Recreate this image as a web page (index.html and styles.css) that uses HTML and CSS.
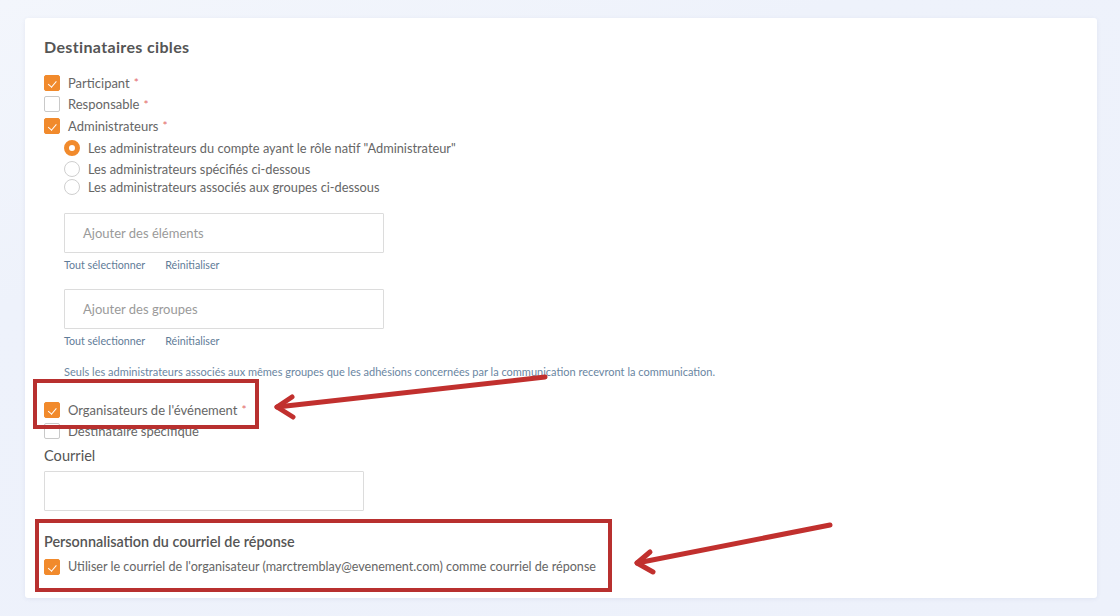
FILE: index.html
```html
<!DOCTYPE html>
<html lang="fr">
<head>
    <meta charset="UTF-8">
    <meta name="viewport" content="width=device-width, initial-scale=1.0">
    <title>Destinataires cibles</title>
    <link rel="stylesheet" href="styles.css">
</head>
<body>
    <div class="card">
        <h2 class="section-title">Destinataires cibles</h2>

        <div class="check-list">
            <label class="check-row"><span class="box checked"></span>Participant <span class="req">*</span></label>
            <label class="check-row"><span class="box"></span>Responsable <span class="req">*</span></label>
            <label class="check-row"><span class="box checked"></span>Administrateurs <span class="req">*</span></label>
        </div>

        <div class="admin-options">
            <div class="radio-list">
                <label class="radio-row first"><span class="radio selected"></span>Les administrateurs du compte ayant le rôle natif "Administrateur"</label>
                <label class="radio-row"><span class="radio"></span>Les administrateurs spécifiés ci-dessous</label>
                <label class="radio-row last"><span class="radio"></span>Les administrateurs associés aux groupes ci-dessous</label>
            </div>

            <div class="picker">
                <div class="fake-input">Ajouter des éléments</div>
                <div class="picker-links">
                    <a href="#">Tout sélectionner</a>
                    <a href="#">Réinitialiser</a>
                </div>
            </div>

            <div class="picker">
                <div class="fake-input">Ajouter des groupes</div>
                <div class="picker-links">
                    <a href="#">Tout sélectionner</a>
                    <a href="#">Réinitialiser</a>
                </div>
            </div>

            <p class="note">Seuls les administrateurs associés aux mêmes groupes que les adhésions concernées par la communication recevront la communication.</p>
        </div>

        <div class="check-list organisers">
            <label class="check-row"><span class="box checked"></span>Organisateurs de l'événement <span class="req">*</span></label>
            <label class="check-row"><span class="box"></span>Destinataire spécifique</label>
        </div>

        <div class="field">
            <div class="field-label">Courriel</div>
            <div class="fake-input email"></div>
        </div>

        <div class="reply">
            <div class="field-label strong">Personnalisation du courriel de réponse</div>
            <label class="check-row"><span class="box checked"></span>Utiliser le courriel de l'organisateur (marctremblay@evenement.com) comme courriel de réponse</label>
        </div>
    </div>

    <!-- annotations drawn on top of the screenshot -->
    <svg class="annotations" width="1120" height="616" viewBox="0 0 1120 616">
        <g fill="none" stroke="#b8302f" stroke-width="4">
            <rect x="35" y="381" width="222" height="46"/>
            <rect x="37" y="521" width="573" height="69"/>
        </g>
        <g fill="none" stroke="#c1302e" stroke-width="5" stroke-linecap="round" stroke-linejoin="round">
            <line x1="545" y1="377" x2="277" y2="407"/>
            <polyline points="292,397 277,407 293,417"/>
            <line x1="830" y1="525" x2="637" y2="563"/>
            <polyline points="650,552 637,563 653,572"/>
        </g>
    </svg>
</body>
</html>
```

FILE: styles.css
```css
* {
    margin: 0;
    padding: 0;
    box-sizing: border-box;
}

body {
    font-family: 'Lato', 'Open Sans', sans-serif;
    background: linear-gradient(160deg, #f3f6fc 0%, #eef2fb 30%, #edf1fb 100%);
    color: #666;
    width: 1120px;
    height: 616px;
    overflow: hidden;
    position: relative;
}

.card {
    margin: 18px 0 0 25px;
    width: 1072px;
    background-color: #fff;
    border-radius: 3px;
    box-shadow: 0 1px 4px rgba(60, 80, 140, 0.08);
    padding: 19px 19px 20px;
}

.section-title {
    font-size: 16px;
    letter-spacing: 0.35px;
    font-weight: 700;
    color: #555;
    line-height: 20px;
    margin-bottom: 15px;
}

.check-row {
    display: flex;
    align-items: center;
    height: 21.5px;
    font-size: 13px;
    color: #666;
    cursor: pointer;
}

.reply .check-row {
    font-size: 12.6px;
}

.box {
    width: 16px;
    height: 16px;
    border: 1px solid #c9c9c9;
    border-radius: 2px;
    background-color: #fff;
    margin-right: 8px;
    flex-shrink: 0;
    position: relative;
}

.box.checked {
    background-color: #f18a2c;
    border-color: #f18a2c;
}

.box.checked::after {
    content: "";
    position: absolute;
    left: 4.5px;
    top: 3px;
    width: 3.5px;
    height: 6.5px;
    border: solid #fff;
    border-width: 0 1.8px 1.8px 0;
    transform: rotate(40deg);
}

.req {
    color: #e36a6a;
    font-size: 12px;
    margin-left: 4px;
}

.admin-options {
    padding-left: 20px;
}

.radio-list {
    padding-top: 1px;
    margin-bottom: 17.5px;
}

.radio-row {
    display: flex;
    align-items: center;
    height: 20px;
    font-size: 12.8px;
    color: #666;
}

.radio-row.first {
    height: 21px;
}

.radio-row.last {
    height: 17px;
}

.radio {
    width: 16px;
    height: 16px;
    border: 1px solid #cfcfcf;
    border-radius: 50%;
    background-color: #fff;
    margin-right: 8px;
    flex-shrink: 0;
}

.radio.selected {
    border: 5px solid #f18a2c;
}

.picker {
    margin-bottom: 17px;
}

.fake-input {
    width: 320px;
    height: 40px;
    border: 1px solid #dcdcdc;
    border-radius: 1px;
    padding-left: 18px;
    display: flex;
    align-items: center;
    font-size: 13px;
    color: #9a9a9a;
    background-color: #fff;
}

.picker-links {
    display: flex;
    gap: 20px;
    margin-top: 5px;
    line-height: 14px;
}

.picker-links a {
    font-size: 10.7px;
    color: #5f7c98;
    text-decoration: none;
}

.note {
    margin-top: 1px;
    font-size: 11px;
    line-height: 14px;
    color: #6a86a2;
}

.organisers {
    margin-top: 20px;
}

.field {
    margin-top: 3.5px;
}

.field-label {
    font-size: 14.6px;
    line-height: 20px;
    color: #555;
    margin-bottom: 5px;
}

.field-label.strong {
    font-size: 14.4px;
    font-weight: 600;
    margin-bottom: 4.5px;
}

.reply {
    margin-top: 21px;
}

.annotations {
    position: absolute;
    left: 0;
    top: 0;
    pointer-events: none;
}
```
